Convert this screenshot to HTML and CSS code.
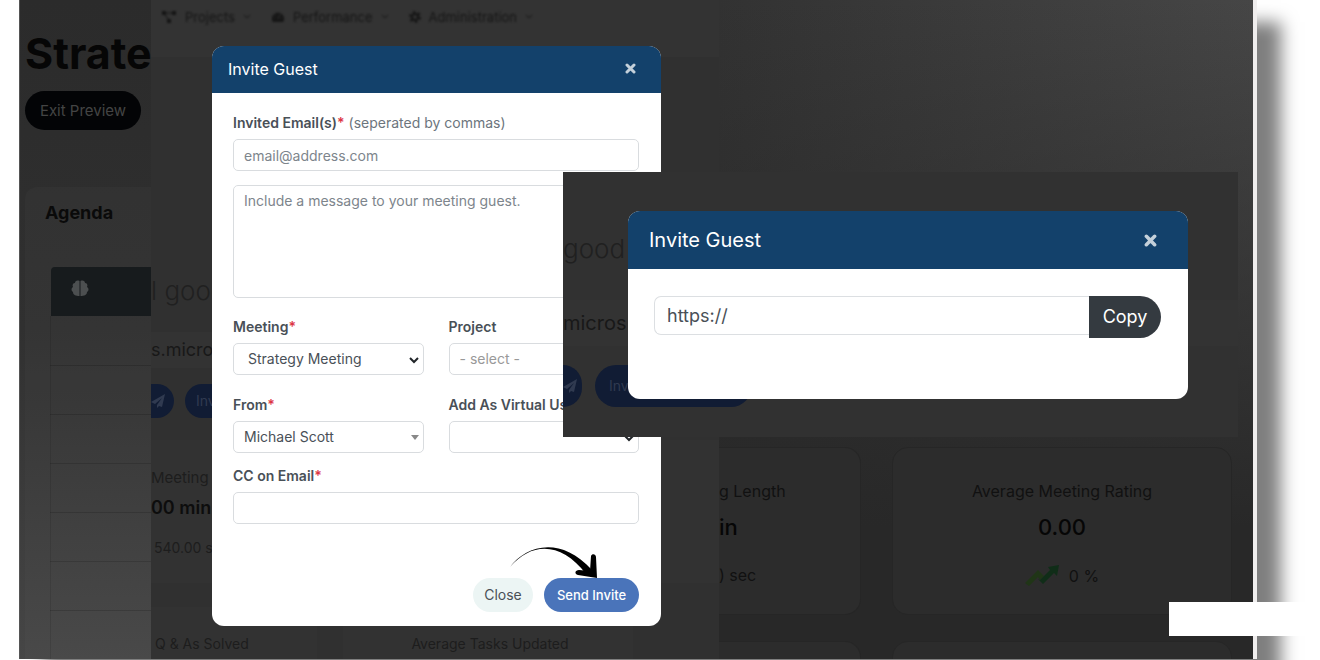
FILE: index.html
```html
<!DOCTYPE html>
<html lang="en">
<head>
    <meta charset="UTF-8">
    <meta name="viewport" content="width=device-width, initial-scale=1.0">
    <title>Invite Guest</title>
    <link rel="stylesheet" href="styles.css">
</head>
<body>
    <div class="stage">
        <div class="backdrop">
            <!-- Agenda preview -->
            <section class="agenda">
                <h1>Strate</h1>
                <button type="button" class="exit-btn">Exit Preview</button>
                <div class="agenda-card">
                    <h2>Agenda</h2>
                    <table>
                        <thead>
                            <tr><th>
                                <svg width="18" height="17" viewBox="0 0 18 17" fill="#4c4f50" aria-label="Topic">
                                    <path d="M8.500 1C6 0 4 1 4 3C2 3 1 5 2 7C0 8 0 11 2 12C2 15 5 16 8.500 16Z"/>
                                    <path d="M9.500 1C12 0 14 1 14 3C16 3 17 5 16 7C18 8 18 11 16 12C16 15 13 16 9.500 16Z"/>
                                </svg>
                            </th></tr>
                        </thead>
                        <tbody>
                            <tr><td></td></tr>
                            <tr><td></td></tr>
                            <tr><td></td></tr>
                            <tr><td></td></tr>
                            <tr><td></td></tr>
                            <tr><td></td></tr>
                            <tr><td></td></tr>
                        </tbody>
                    </table>
                </div>
            </section>

            <!-- Page behind the first dialog -->
            <section class="home">
                <nav class="top-nav">
                    <a href="#">
                        <svg width="16" height="14" viewBox="0 0 16 14"><path d="M3 3H13M4 4L8 11" stroke="currentColor" stroke-width="1" fill="none"/><path d="M1 1h4v4H1zM11 1h4v4h-4zM6 9h4v4H6z" fill="currentColor"/></svg>
                        Projects
                        <svg width="8" height="6" viewBox="0 0 8 6"><path d="M1 1L4 4L7 1" stroke="currentColor" fill="none"/></svg>
                    </a>
                    <a href="#">
                        <svg width="14" height="14" viewBox="0 0 14 14"><path d="M2 12A6 6 0 1 1 12 12Z" fill="currentColor"/><path d="M7 9L9 4M3 8H4M4 5L5 6M10 8H11" stroke="#333" fill="none"/></svg>
                        Performance
                        <svg width="8" height="6" viewBox="0 0 8 6"><path d="M1 1L4 4L7 1" stroke="currentColor" fill="none"/></svg>
                    </a>
                    <a href="#">
                        <svg width="12" height="14" viewBox="0 0 12 14"><circle cx="6" cy="7" r="3" stroke="currentColor" stroke-width="2" fill="none"/><circle cx="6" cy="7" r="5" stroke="currentColor" stroke-width="2" stroke-dasharray="2.6 2.6" fill="none"/></svg>
                        Administration
                        <svg width="8" height="6" viewBox="0 0 8 6"><path d="M1 1L4 4L7 1" stroke="currentColor" fill="none"/></svg>
                    </a>
                </nav>
                <p class="greeting">l good</p>
                <p class="link-row">s.micros</p>
                <div class="actions">
                    <button type="button" class="pill send" aria-label="Send">
                        <svg width="14" height="14" viewBox="0 0 14 14"><path d="M14 0L0 8L4 10L11 4L6 11V14L8 12L11 13Z" fill="currentColor"/></svg>
                    </button>
                    <button type="button" class="pill">Inv</button>
                </div>
                <div class="home-card">
                    <p>Meeting L</p>
                    <strong>00 min</strong>
                    <p class="small">540.00 s</p>
                </div>
                <div class="home-row">
                    <div class="home-card"><p>Q &amp; As Solved</p></div>
                    <div class="home-card center"><p>Average Tasks Updated</p></div>
                </div>
            </section>

            <!-- Metrics -->
            <section class="metrics">
                <div class="metric cut">
                    <p>g Length</p>
                    <strong>in</strong>
                    <p class="trend">) sec</p>
                </div>
                <div class="metric">
                    <p>Average Meeting Rating</p>
                    <strong>0.00</strong>
                    <p class="trend">
                        <svg width="34" height="22" viewBox="0 0 34 22"><path d="M0 18L13 5L19 11L15 15L13 12L4 21Z" fill="#203517"/><path d="M15 15L25 5L23 2L34 0L32 11L29 8L18 19L13 14Z" fill="#102d18"/></svg>
                        0 %
                    </p>
                </div>
                <div class="metric cut"></div>
                <div class="metric"></div>
            </section>
        </div>

        <!-- Invite form -->
        <form class="modal invite">
            <header class="modal-header">
                <h3>Invite Guest</h3>
                <button type="button" class="close-x" aria-label="Close dialog">
                    <svg width="11" height="11" viewBox="0 0 11 11"><path d="M2 2L9 9M9 2L2 9" stroke="currentColor" stroke-width="3" stroke-linecap="round"/></svg>
                </button>
            </header>
            <div class="modal-body">
                <label for="emails"><b>Invited Email(s)<i>*</i></b> (seperated by commas)</label>
                <input type="text" id="emails" placeholder="email@address.com">
                <textarea id="message" aria-label="Message" placeholder="Include a message to your meeting guest."></textarea>
                <div class="fields">
                    <div>
                        <label for="meeting"><b>Meeting<i>*</i></b></label>
                        <div class="select">
                            <select id="meeting" class="indent"><option>Strategy Meeting</option></select>
                            <svg width="10" height="7" viewBox="0 0 10 7"><path d="M1 1L5 5L9 1" stroke="#212529" stroke-width="2" fill="none"/></svg>
                        </div>
                    </div>
                    <div>
                        <label for="project"><b>Project</b></label>
                        <div class="select">
                            <select id="project" class="empty"><option>- select -</option></select>
                        </div>
                    </div>
                    <div>
                        <label for="from"><b>From<i>*</i></b></label>
                        <div class="select">
                            <select id="from"><option>Michael Scott</option></select>
                            <svg width="8" height="5" viewBox="0 0 8 5"><path d="M0 0H8L4 5Z" fill="#888"/></svg>
                        </div>
                    </div>
                    <div>
                        <label for="virtual"><b>Add As Virtual User</b></label>
                        <div class="select">
                            <select id="virtual"><option></option></select>
                            <svg width="10" height="7" viewBox="0 0 10 7"><path d="M1 1L5 5L9 1" stroke="#212529" stroke-width="2" fill="none"/></svg>
                        </div>
                    </div>
                </div>
                <label for="cc"><b>CC on Email<i>*</i></b></label>
                <input type="text" id="cc">
            </div>
            <footer class="modal-footer">
                <button type="button" class="btn-close">Close</button>
                <button type="button" class="btn-send">Send Invite</button>
                <svg class="arrow" width="90" height="34" viewBox="0 0 90 34">
                    <path d="M0 21C15 1 49 -12 82 24L76 28C52 -4 22 -5 0 21Z"/>
                    <path d="M81 10C82 7 86 8 86 11L87 32L68 29C64 28 65 24 69 24L80 25Z"/>
                </svg>
            </footer>
        </form>

        <!-- Link to share -->
        <div class="share">
            <div class="share-back">
                <p class="greeting">good</p>
                <p class="link-row">micros</p>
                <div class="actions">
                    <button type="button" class="pill send" aria-label="Send">
                        <svg width="14" height="16" viewBox="0 0 14 14"><path d="M14 0L0 8L4 10L11 4L6 11V14L8 12L11 13Z" fill="currentColor"/></svg>
                    </button>
                    <button type="button" class="pill wide">Inv</button>
                </div>
            </div>
            <div class="modal link-modal">
                <header class="modal-header">
                    <h3>Invite Guest</h3>
                    <button type="button" class="close-x" aria-label="Close dialog">
                        <svg width="13" height="13" viewBox="0 0 11 11"><path d="M2 2L9 9M9 2L2 9" stroke="currentColor" stroke-width="3" stroke-linecap="round"/></svg>
                    </button>
                </header>
                <div class="copy-row">
                    <input type="text" aria-label="Meeting link" value="https://">
                    <button type="button">Copy</button>
                </div>
            </div>
        </div>

        <div class="patch"></div>
    </div>
</body>
</html>
```
FILE: styles.css
```css
* {
    box-sizing: border-box;
}

body {
    font-family: Inter, "Liberation Sans", sans-serif;
    font-size: 14px;
    line-height: 20px;
    background-color: #fff;
    color: #495057;
    margin: 0;
    height: 100vh;
    overflow: hidden;
}

h1, h2, h3, p {
    margin: 0;
}

input, select, textarea, button {
    font: inherit;
}

button {
    border: none;
    padding: 0;
    cursor: pointer;
}

.stage {
    position: relative;
    height: calc(100vh - 1px);
    margin: 0 63px 0 19px;
    border-right: 4px solid #f0eeee;
    box-shadow: 24px 22px 16px rgba(0, 0, 0, 0.5);
}

.backdrop {
    display: grid;
    grid-template-columns: 132px 568px 1fr;
    height: 100%;
    overflow: hidden;
    background-color: #303030;
}

/* agenda column */
.agenda {
    overflow: hidden;
    padding: 28px 0 0 5px;
    background: linear-gradient(#2b2b2b, #303030 50%, #464646);
    border-left: 1px solid #555;
}

.agenda h1 {
    font-size: 43px;
    line-height: 50px;
    color: #060606;
}

.exit-btn {
    display: block;
    margin-top: 13px;
    width: 116px;
    height: 39px;
    border-radius: 20px;
    background-color: #030406;
    color: #444;
    font-size: 15px;
}

.agenda-card {
    margin-top: 57px;
    padding: 16px 0 0 20px;
    border-radius: 12px 0 0 0;
    background-color: rgba(255, 255, 255, 0.02);
    height: 500px;
}

.agenda h2 {
    font-size: 18px;
    line-height: 20px;
    color: #0a0a0a;
}

.agenda table {
    width: 100%;
    margin: 44px 0 0 5px;
    border-collapse: collapse;
}

.agenda th {
    height: 49px;
    padding: 0 0 6px 20px;
    text-align: left;
    background-color: #171b1d;
    border-radius: 4px 0 0 0;
}

.agenda th svg {
    display: block;
}

.agenda td {
    height: 49px;
    border-bottom: 1px solid rgba(0, 0, 0, 0.15);
    border-left: 1px solid rgba(0, 0, 0, 0.1);
}

/* blurred home page */
.home {
    overflow: hidden;
    color: #1d1d1d;
}

.top-nav {
    display: flex;
    gap: 20px;
    height: 57px;
    padding: 7px 0 0 10px;
    background-color: #333;
}

.top-nav a {
    display: flex;
    align-items: center;
    gap: 8px;
    height: 20px;
    color: #151515;
    font-size: 13px;
    text-decoration: none;
    filter: blur(1px);
}

.greeting {
    font-size: 26px;
    font-weight: 300;
    line-height: 30px;
    color: #202020;
}

.home .greeting {
    margin-top: 219px;
}

.link-row {
    font-size: 18px;
    line-height: 36px;
    color: #181818;
    background-color: #333;
}

.home .link-row {
    margin-top: 26px;
}

.actions {
    display: flex;
    gap: 11px;
}

.home .actions {
    margin-top: 16px;
}

.pill {
    width: 100px;
    height: 34px;
    padding: 0 11px;
    border-radius: 21px;
    background-color: #111c34;
    color: #303a50;
    text-align: left;
}

.pill.send {
    width: 23px;
    padding: 0;
    border-radius: 0 21px 21px 0;
}

.pill svg {
    display: block;
}

.home-card {
    background-color: #323232;
    font-size: 15px;
}

.home > .home-card {
    margin-top: 22px;
    height: 143px;
    padding-top: 28px;
}

.home-card strong {
    display: block;
    margin-top: 10px;
    font-size: 18px;
    font-weight: 600;
    line-height: 20px;
    color: #0d0d0d;
}

.home-card .small {
    margin: 20px 0 0 3px;
    font-size: 14px;
}

.home-row {
    display: grid;
    grid-template-columns: 166px 290px;
    gap: 26px;
    margin-top: 24px;
}

.home-row .home-card {
    height: 80px;
    padding: 27px 0 0 4px;
    font-size: 14px;
}

.home-row .center {
    text-align: center;
}

/* metric cards */
.metrics {
    display: grid;
    grid-template-columns: 142px 1fr;
    grid-template-rows: 168px 168px;
    gap: 26px 31px;
    padding: 447px 21px 0 0;
    overflow: hidden;
    background: linear-gradient(to top, #282828 20%, rgba(40, 40, 40, 0) 100%), linear-gradient(to right, #323232, #464646);
}

.metric {
    padding: 33px 0 0;
    border-radius: 16px;
    border: 1px solid #262626;
    background-color: #2c2c2c;
    color: #111;
    font-size: 16px;
    text-align: center;
}

.metric.cut {
    border-left: none;
    border-radius: 0 16px 16px 0;
    text-align: left;
}

.metric strong {
    display: block;
    margin-top: 11px;
    font-size: 22px;
    font-weight: 500;
    line-height: 30px;
    color: #060606;
}

.trend {
    display: flex;
    align-items: center;
    justify-content: center;
    gap: 10px;
    margin-top: 23px;
}

.cut .trend {
    justify-content: flex-start;
}

/* dialogs */
.modal {
    position: absolute;
    border-radius: 12px;
    background-color: #fff;
    overflow: hidden;
}

.modal-header {
    display: flex;
    align-items: center;
    justify-content: space-between;
    background-color: #13416b;
    color: #fff;
}

.modal-header h3 {
    font-weight: 400;
}

.close-x {
    background: none;
    color: #c4d0da;
}

.close-x svg {
    display: block;
}

.invite {
    left: 193px;
    top: 46px;
    width: 449px;
}

.invite .modal-header {
    height: 47px;
    padding: 0 25px 2px 16px;
}

.invite h3 {
    font-size: 16px;
}

.modal-body {
    padding: 20px 22px 0 21px;
}

.modal-body label {
    display: block;
    margin-bottom: 6px;
    color: #6c757d;
}

.modal-body b {
    font-weight: 600;
    color: #495057;
}

.modal-body i {
    color: #dc3545;
    font-style: normal;
}

.modal-body input,
.modal-body textarea,
.modal-body select {
    display: block;
    width: 100%;
    height: 32px;
    padding: 0 10px;
    border: 1px solid #d9dcdf;
    border-radius: 5px;
    background-color: #fff;
    color: #495057;
}

.modal-body textarea {
    height: 113px;
    margin-top: 14px;
    padding-top: 5px;
    resize: none;
}

.modal-body ::placeholder {
    color: #7d858c;
}

.fields {
    display: grid;
    grid-template-columns: 1fr 1fr;
    gap: 20px 25px;
    margin: 19px 0 13px;
}

.select {
    position: relative;
}

.modal-body select {
    appearance: none;
}

.modal-body .indent {
    padding-left: 14px;
}

.modal-body .empty {
    color: #999;
}

.select svg {
    position: absolute;
    right: 5px;
    top: 14px;
}

.modal-footer {
    position: relative;
    display: flex;
    justify-content: flex-end;
    gap: 11px;
    padding: 54px 22px 14px;
}

.modal-footer button {
    height: 34px;
    border-radius: 17px;
}

.btn-close {
    width: 60px;
    background-color: #ecf5f4;
    color: #495057;
}

.btn-send {
    width: 95px;
    background-color: #4a74ba;
    color: #fff;
    font-size: 13px;
    font-weight: 500;
}

.arrow {
    position: absolute;
    right: 61px;
    top: 22px;
}

/* share link */
.share {
    position: absolute;
    left: 544px;
    right: 15px;
    top: 172px;
    height: 265px;
    background-color: #313131;
}

.share-back {
    padding-top: 62px;
    overflow: hidden;
}

.share .link-row {
    margin-top: 36px;
    line-height: 46px;
    font-size: 20px;
}

.share .actions {
    gap: 13px;
    margin-top: 19px;
}

.share .pill {
    height: 42px;
}

.share .pill.send {
    width: 19px;
}

.share .pill.wide {
    width: 157px;
    padding-left: 14px;
}

.link-modal {
    left: 65px;
    right: 50px;
    top: 39px;
}

.link-modal .modal-header {
    height: 58px;
    padding: 0 31px 0 21px;
}

.link-modal h3 {
    font-size: 20px;
}

.copy-row {
    display: flex;
    align-items: flex-start;
    padding: 27px 27px 61px 26px;
    font-size: 18px;
}

.copy-row input {
    flex: 1;
    min-width: 0;
    height: 39px;
    padding: 0 12px;
    border: 1px solid #dcdfe2;
    border-right: none;
    border-radius: 7px 0 0 7px;
    color: #495057;
}

.copy-row button {
    width: 72px;
    height: 42px;
    border-radius: 0 21px 21px 0;
    background-color: #343a40;
    color: #fff;
}

.patch {
    position: absolute;
    right: -67px;
    top: 602px;
    width: 151px;
    height: 34px;
    background-color: #fff;
}
```
